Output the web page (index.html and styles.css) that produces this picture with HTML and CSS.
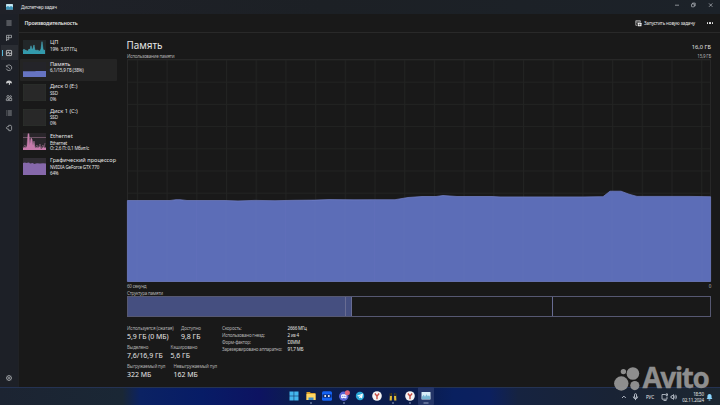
FILE: index.html
```html
<!DOCTYPE html>
<html lang="ru">
<head>
<meta charset="utf-8">
<title>Диспетчер задач</title>
<link rel="stylesheet" href="styles.css">
</head>
<body>
<div class="screen">
  <header class="titlebar">
    <svg class="app-icon" viewBox="0 0 7 6"><rect width="7" height="5.6" rx=".6" fill="#a9d9ea"/><path d="M0 3.2 2 2l1.5 1.2L5 2l2 1.4v2.2H0z" fill="#3b91b5"/><path d="M.5.6h6v1h-6z" fill="#e5f5fa"/></svg>
    <span class="app-name">Диспетчер задач</span>
    <svg class="window-controls" viewBox="0 0 42 8"><g fill="none" stroke="#c5c8ce" stroke-width=".65"><path d="M1 4.2h4"/><rect x="17.500" y="3" width="2.8" height="2.8" rx=".4"/><path d="M18.500 2.9V2.1h2.7v2.8h-.8M35 2.400l3.4 3.4m0-3.4-3.4 3.4"/></g></svg>
  </header>
  <div class="window">
    <nav class="rail">
      <svg viewBox="0 0 8 8"><path d="M1.4 2h5.2M1.4 4h5.2M1.4 6h5.2"/></svg>
      <svg viewBox="0 0 8 8"><path d="M1.500 7V1.300h5v2.400H1.500M3.700 1.300v4.400H1.500"/></svg>
      <svg class="current" viewBox="0 0 8 8"><rect x="1.4" y="1.4" width="5.2" height="5.2" rx=".6"/><path d="m1.6 4.3 1.2-.2.8-1.3.9 2.5.8-1.1h1.1"/></svg>
      <svg viewBox="0 0 8 8"><path d="M1.6 2.2A2.8 2.8 0 1 1 1.3 4.7M1.4 1.3v1.3h1.3M4 4.300 2.700 2.900M4 4.300l.7.500"/></svg>
      <svg viewBox="0 0 8 8"><path class="solid" d="M1 4.5a3 3 0 0 1 6 0L5.2 4 4.7 6H3.8L4 3.9z"/></svg>
      <svg viewBox="0 0 8 8"><circle cx="3" cy="2.6" r="1.1"/><circle cx="5.6" cy="2.6" r=".9"/><path d="M1.3 6.5V4.8h2.2v1.8H1.4M4.3 4.4h2.4v2.2H4.3z"/></svg>
      <svg viewBox="0 0 8 8"><path d="M2.6 2h4.2M2.6 4h4.2M2.6 6h4.2M1 2h.7M1 4h.7M1 6h.7"/></svg>
      <svg viewBox="0 0 8 8"><path d="M3.700 1.300h2.200l.7 1.200v3l-.7 1.200H3.800V5.200L2 5 1.4 3.8 2.3 2.6h1.3z"/></svg>
      <svg class="settings" viewBox="0 0 8 8"><circle cx="4" cy="4" r="2.4"/><circle cx="4" cy="4" r=".9"/><path d="M4 1v.7M4 6.3V7M1 4h.7M6.3 4H7M1.9 1.9l.5.5M5.6 5.6l.5.5M1.9 6.1l.5-.5M5.6 2.4l.5-.5"/></svg>
    </nav>
    <main class="page">
      <div class="toolbar">
        <h1>Производительность</h1>
        <svg class="run-icon" viewBox="0 0 7 7"><g fill="none" stroke="#dedede" stroke-width=".65"><path d="M5.3 2.3V.7H.8v4.6h1.5M.8 2h4.5"/></g><rect x="2.8" y="2.8" width="3.7" height="3.5" rx=".4" fill="#eee"/><path d="M4.6 3.5v2M3.6 4.5h2" stroke="#222" stroke-width=".45"/></svg>
        <span class="run">Запустить новую задачу</span>
        <span class="more"><i></i><i></i><i></i></span>
      </div>
      <div class="content">
        <aside class="devices">
          <div class="device cpu">
            <svg viewBox="0 0 23 17" preserveAspectRatio="none"><rect width="23" height="17" fill="#222729"/><path d="M0 17v-4l1-2 1 2 1-1 1 2 1-1 1-2 1 1 1-5 1 5 1-2 1-4 1 7 1-1 1 1 1-1 1 2 1-1 1-2 1-9 1 9 1 2 1-1v5z" fill="#329aac"/><path d="M0 13l1-2 1 2 1-1 1 2 1-1 1-2 1 1 1-5 1 5 1-2 1-4 1 7 1-1 1 1 1-1 1 2 1-1 1-2 1-9 1 9 1 2 1-1" fill="none" stroke="#54bdd0" stroke-width=".5"/></svg>
            <div><b>ЦП</b><span>19%&nbsp; 3,97 ГГц</span></div>
          </div>
          <div class="device memory active">
            <svg viewBox="0 0 23 17" preserveAspectRatio="none"><rect width="23" height="17" fill="#242429"/><path d="M0 10.500h12l1-.3h10V17H0z" fill="#6674c2"/></svg>
            <div><b>Память</b><span>6,1/15,9 ГБ (38%)</span></div>
          </div>
          <div class="device">
            <svg viewBox="0 0 23 17"><rect x=".2" y=".2" width="22.6" height="16.6" fill="#282828" stroke="#343a34" stroke-width=".4"/></svg>
            <div><b>Диск 0 (E:)</b><span>SSD</span><span>0%</span></div>
          </div>
          <div class="device">
            <svg viewBox="0 0 23 17"><rect x=".2" y=".2" width="22.6" height="16.6" fill="#282828" stroke="#343a34" stroke-width=".4"/></svg>
            <div><b>Диск 1 (C:)</b><span>SSD</span><span>0%</span></div>
          </div>
          <div class="device net">
            <svg viewBox="0 0 23 17"><rect width="23" height="17" fill="#29252a"/><path d="M0 4.5h23" stroke="#8b6880" stroke-width=".7"/><path d="M0 17v-2l2-1 1 1 1-2 1-12h1l.8 11L8 5l1 1 1 7 1-5 1 7 2-1 1 1 2-2 1 3 2-2 2 1 1-1v3z" fill="#c779aa"/><path d="M0 15l2-3 1 3 1-2L5 .5h1l.8 11L8 5l1 1 1 7 1-5 1 7 2-3 1 3 2-4 1 4 2-3 1 3 1-5" fill="none" stroke="#d08db9" stroke-width=".4"/></svg>
            <div><b>Ethernet</b><span>Ethernet</span><span>О: 2,6 П: 0,1 Мбит/с</span></div>
          </div>
          <div class="device gpu">
            <svg viewBox="0 0 23 17"><rect width="23" height="17" fill="#302c33"/><path d="M0 5l2-.4 1 .4 3-.5 1 1 3-.4 1 .8 3-.6 3 .2 3-.2 3 .2V17H0z" fill="#8668ab"/></svg>
            <div><b>Графический процессор</b><span>NVIDIA GeForce GTX 770</span><span>64%</span></div>
          </div>
        </aside>
        <section class="detail">
          <div class="heading"><h2>Память</h2><span>16,0 ГБ</span></div>
          <div class="caption top"><span>Использование памяти</span><span class="right">15,9 ГБ</span></div>
          <svg class="chart" viewBox="0 0 584 223">
            <defs><pattern id="grid" x="9.9" y=".5" width="29.7" height="22.2" patternUnits="userSpaceOnUse"><path d="M.5 0v22.2M0 .5h29.7" stroke="#222322" fill="none"/></pattern></defs>
            <rect width="584" height="223" fill="url(#grid)"/>
            <path d="M.5 222V.5h583V222" fill="none" stroke="#272727"/>
            <path class="usage" d="M.4 141.500H43l6-.8h4l7 .8h38l13 .4 17-.5 20 .3 20-.4 20-.2 14-.5 25 .2 18-.1h23l13-2.2 14-1h14l7-1 14 1h35l8 .4h84l15-.2h4l7-5.500h11l8 3 8 2.200h52l21.600.3V222.500H.4z"/>
            <path class="usage-grid" d="M10 142v80M40 142v80M69.500 142v80M99 142v80M129 142v80M158.500 142v80M188 142v80M218 142v80M247.500 142v80M277 142v80M307 138v84M337 138v84M366 138v84M396 138v84M426 138v84M456 138v84M485 134v88M515 138v84M545 138v84M575 138v84"/>
          </svg>
          <div class="caption axis"><span>60 секунд</span><span class="right">0</span></div>
          <div class="caption structure">Структура памяти</div>
          <div class="composition"><i class="used"></i><i class="modified"></i><i class="standby"></i><i class="free"></i></div>
          <div class="facts">
            <div class="stats">
              <div class="stat-row row-a"><div><span>Используется (сжатая)</span><b>5,9 ГБ (0 МБ)</b></div><div><span>Доступно</span><b>9,8 ГБ</b></div></div>
              <div class="stat-row row-b"><div><span>Выделено</span><b>7,6/16,9 ГБ</b></div><div><span>Кэшировано</span><b>5,6 ГБ</b></div></div>
              <div class="stat-row row-c"><div><span>Выгружаемый пул</span><b>322 МБ</b></div><div><span>Невыгружаемый пул</span><b>162 МБ</b></div></div>
            </div>
            <dl class="hardware">
              <dt>Скорость:</dt><dd>2666 МГц</dd>
              <dt>Использовано гнезд:</dt><dd>2 из 4</dd>
              <dt>Форм-фактор:</dt><dd>DIMM</dd>
              <dt>Зарезервировано аппаратно:</dt><dd>91,7 МБ</dd>
            </dl>
          </div>
        </section>
      </div>
    </main>
  </div>
  <footer class="taskbar">
    <div class="apps">
      <svg viewBox="0 0 16 18"><path d="M3.500 4.500h4.200v4.200H3.500zM8.200 4.500h4.300v4.200H8.200zM3.500 9.200h4.200v4.200H3.500zM8.200 9.200h4.300v4.200H8.200z" fill="#43b6ed"/></svg>
      <svg viewBox="0 0 16 18"><path d="M3.500 5h3.300l1 1h4.700v7h-9z" fill="#dba22b"/><path d="M3.500 7h9v6h-9z" fill="#ffd764"/><path d="M5.500 10.500h5V13h-5z" fill="#3d8cc6"/><path class="run-mark" d="M7 16h2"/></svg>
      <svg viewBox="0 0 16 18"><rect x="3" y="4.300" width="10" height="9.400" rx="1.500" fill="#1463f4"/><path d="M3.500 7.400h9v3.200h-9z" fill="#0a286f"/><circle cx="6.200" cy="9" r="1" fill="#fff"/><circle cx="9.800" cy="9" r="1" fill="#fff"/></svg>
      <svg viewBox="0 0 16 18"><circle cx="7.700" cy="9.300" r="4.700" fill="#5865d8"/><path d="M5.100 11V8l1.200-.7h3l1.200.7v3L9 11.600l-.5-.7H7l-.5.7z" fill="#f2f4ff"/><circle cx="6.800" cy="9.300" r=".6" fill="#5865d8"/><circle cx="8.900" cy="9.300" r=".6" fill="#5865d8"/><circle cx="11.400" cy="5.800" r="2.500" fill="#df647b"/><path class="run-mark" d="M7 16h2"/></svg>
      <svg viewBox="0 0 16 18"><circle cx="8" cy="9" r="4.200" fill="#2aa8d7"/><path d="m5 8.700 6-2.200-1 5-1.700-1.100-1.100 1V9.700L9.400 8l-3 1.400z" fill="#fff"/></svg>
      <svg viewBox="0 0 16 18"><circle cx="8" cy="9" r="4.800" fill="#f4f4f4"/><path d="M5.900 6.500 8 9.200l2.100-2.700M8 9v3.200" fill="none" stroke="#c84d41" stroke-width="1.400"/></svg>
      <svg viewBox="0 0 16 18"><path d="M5 6h2v2l-.2 5.500H4.600zM9 6h2l.4 7.500H9.200L9 8z" fill="#e2bb35"/><path d="M4.600 6h2.300v3H4.600zM9.100 6h2.300v3H9.100z" fill="#2b2c28"/><path class="run-mark" d="M7 16h2"/></svg>
      <svg viewBox="0 0 16 18"><circle cx="8" cy="9" r="4.800" fill="#f4f4f4"/><path d="M5.900 6.500 8 9.200l2.100-2.700M8 9v3.200" fill="none" stroke="#c84d41" stroke-width="1.400"/><path class="run-mark" d="M7 16h2"/></svg>
      <svg class="selected-app" viewBox="0 0 16 18"><rect x="3.500" y="5" width="9" height="7.500" rx=".5" fill="#d8edf7"/><path d="m4 9.800 1.700-2 1.300 2 1.500-2.500 1.300 2 1.200-1 1 1.500V12H4z" fill="#78b5d1"/><path class="run-mark" d="M5.500 16h5"/></svg>
    </div>
    <div class="tray">
      <svg class="tray-left" viewBox="0 0 22 18"><g fill="none" stroke="#d5dce6" stroke-width=".8"><path d="m2 10 1.900-1.900L5.800 10"/><rect x="14.500" y="5.700" width="2" height="4.300" rx="1"/><path d="M13.300 8.500a2.200 2.200 0 0 0 4.400 0M15.500 10.800v1.300"/></g></svg>
      <span class="lang">РУС</span>
      <svg class="tray-net" viewBox="0 0 17 18"><g fill="none" stroke="#d5dce6" stroke-width=".75"><path d="M4.500 6.500H1v4.700h5V8.500M2.500 12.500h3M5 5.900h1.500v1.500H5z"/><path d="M10 8v2h1l1.500 1.400V6.600L11 8zM13.600 7.700q.8 1.200 0 2.600M14.700 6.800q1.500 2.200 0 4.400"/></g></svg>
      <div class="clock"><span>18:50</span><span>02.11.2024</span></div>
      <svg class="bell" viewBox="0 0 7 18"><path d="M3.500 6C2 6 1.400 7 1.400 8.500v1.400l-.9 1.200h6l-.9-1.200V8.500C5.600 7 5 6 3.500 6zM2.600 11.600h1.800v.8H2.600z" fill="#8bd7ff"/></svg>
    </div>
  </footer>
  <div class="watermark">
    <svg viewBox="0 0 27 24"><circle cx="9.400" cy="4.600" r="2.700"/><circle cx="18.900" cy="6.500" r="6.300"/><circle cx="7.300" cy="16.500" r="7.200"/><circle cx="20.800" cy="18.600" r="4.600"/></svg>
    <span>Avito</span>
  </div>
</div>
</body>
</html>
```
FILE: styles.css
```css
* { box-sizing: border-box; }
body { margin: 0; overflow: hidden; }
svg { display: block; flex: none; overflow: visible; }
h1, h2, dl, dd { margin: 0; }
.screen { position: relative; width: 720px; height: 405px; display: flex; flex-direction: column; background: #1d2027; color: #e6e6e6; font-family: "Noto Sans", "Open Sans", sans-serif; white-space: nowrap; }
.titlebar { height: 14px; display: flex; align-items: center; padding: 0 4px 0 6px; background: linear-gradient(90deg, #1f2128, #1c2025 45%, #1c2229); }
.app-icon { width: 7px; height: 6px; }
.app-name { margin-left: 8px; font-size: 4.600px; letter-spacing: -.150px; line-height: 8px; }
.window-controls { width: 42px; height: 8px; margin: -4px 0 0 auto; }
.window { height: 373px; display: flex; }
.rail { width: 18px; display: flex; flex-direction: column; align-items: center; padding-top: 1px; background: #1d2027; }
.rail svg { width: 18px; height: 15px; padding: 4px 5px 3px; fill: none; stroke: #b9bbbf; stroke-width: .7; }
.rail .solid { fill: #c7c8ca; stroke: none; }
.rail .current { background: linear-gradient(#58b7d8, #58b7d8) 1.500px 5px / 1px 6px no-repeat, linear-gradient(90deg, transparent 1.500px, #2a2d33 1.500px); stroke: #eee; }
.rail .settings { margin: auto 0 2px; }
.page { flex: 1; background: #191919; border-left: 1px solid #202226; }
.toolbar { height: 19px; display: flex; align-items: center; border-bottom: 1px solid #292929; padding: 0 7px 0 5.500px; }
h1 { font-size: 5.200px; letter-spacing: -.130px; line-height: 8px; font-weight: 600; }
.run-icon { width: 7px; height: 7px; margin-left: auto; }
.run { margin-left: 2px; font-size: 4.550px; letter-spacing: -.100px; line-height: 8px; }
.more { display: flex; gap: 1.200px; margin-left: 12px; }
.more i { width: 1.200px; height: 1.200px; border-radius: 50%; background: #eee; }
.content { height: 354px; display: flex; }
.devices { width: 98px; padding: 4px 0 0 1px; }
.device { display: flex; gap: 4px; height: 24.500px; padding: 3px 0 0 3px; }
.device > svg { width: 23px; height: 17px; }
.device > div { display: flex; flex-direction: column; margin-top: -1px; }
.device b { font-size: 5.600px; line-height: 7.400px; font-weight: 400; }
.device span { font-size: 4.550px; letter-spacing: -.170px; line-height: 5.800px; }
.device b + span { margin-top: .300px; }
.cpu { height: 21.500px; }
.cpu > svg { height: 14px; }
.device.net > div, .device.gpu > div { margin-top: -.200px; }
.memory { width: 97px; height: 22.500px; background: #242424; border-radius: 1px; }
.memory > svg { height: 15px; }
.detail { width: 584px; margin-left: 10px; }
.heading { height: 19.500px; padding-top: 5px; display: flex; justify-content: space-between; align-items: center; }
h2 { font-size: 9.900px; line-height: 14px; font-weight: 400; margin-left: -.5px; }
.heading span { font-size: 5.700px; padding-top: 3px; }
.caption { display: flex; justify-content: space-between; color: #b0b0b0; font-size: 4.550px; letter-spacing: -.230px; line-height: 6px; }
.top { height: 6.500px; }
.chart { width: 584px; height: 223px; }
.usage { fill: #5c6db7; stroke: #7583ca; stroke-width: .7; }
.usage-grid { stroke: #6270ba; stroke-width: .5; fill: none; }
.axis { height: 7.500px; padding-top: .5px; }
.structure { height: 6.500px; }
.composition { height: 21px; display: flex; border: 1px solid #565872; }
.composition i { border-right: 1px solid #686c92; }
.composition .used { width: 218px; background: #454f80; }
.composition .modified { width: 6px; background: #454f80; }
.composition .standby { width: 201px; }
.composition .free { flex: 1; border: 0; }
.facts { display: flex; padding-top: 8px; }
.stats { width: 95px; }
.stat-row { display: flex; height: 19.200px; }
.stat-row > div { display: flex; flex-direction: column; }
.row-a > div:first-child { width: 54px; }
.row-b > div:first-child { width: 43.500px; }
.row-c > div:first-child { width: 46.500px; }
.stat-row span { font-size: 4.550px; letter-spacing: -.130px; line-height: 7px; color: #b0b0b0; }
.stat-row b { font-size: 6.950px; line-height: 10px; font-weight: 400; }
.hardware { display: grid; grid-template-columns: 65.500px auto; grid-auto-rows: 6.850px; align-content: start; font-size: 4.550px; letter-spacing: -.200px; line-height: 7px; }
.hardware dt { color: #b4b4b4; }
.taskbar { position: relative; height: 18px; display: flex; justify-content: flex-end; border-top: 1px solid #253352; background: linear-gradient(90deg, #1c2432 0, #1a2735 17%, #0b2263 19.500%, #071c66 28%, #0d1361 36%, #0c1e4e 41%, #0b1c4b 58%, #09205f 63%, #0c205f 68%, #162340 72%, #192335 85%, #1c2731); }
.apps { position: absolute; left: 286px; top: -1px; display: flex; gap: .550px; }
.apps svg { width: 16px; height: 18px; }
.run-mark { stroke: #b2c2dd; stroke-width: .8; }
.selected-app { background: #243567; border-radius: 1px; }
.tray { display: flex; align-items: center; height: 17px; margin-right: 7px; }
.tray-left { width: 22px; height: 18px; }
.lang { width: 8px; font-size: 4.550px; letter-spacing: -.070px; margin-left: 4px; }
.tray-net { width: 17px; height: 18px; margin-left: 7px; }
.clock { width: 24px; margin-left: 2px; display: flex; flex-direction: column; align-items: flex-end; font-size: 4.550px; letter-spacing: -.150px; line-height: 6px; }
.bell { width: 7px; height: 18px; margin-left: 2px; }
.watermark { position: absolute; left: 614px; top: 367px; display: flex; color: #969696; opacity: .94; }
.watermark svg { width: 27px; height: 24px; fill: currentColor; }
.watermark span { font: 700 28px/24px "Open Sans", sans-serif; -webkit-text-stroke: .3px currentColor; letter-spacing: -1.500px; margin: -2px 0 0 1.500px; }
```
